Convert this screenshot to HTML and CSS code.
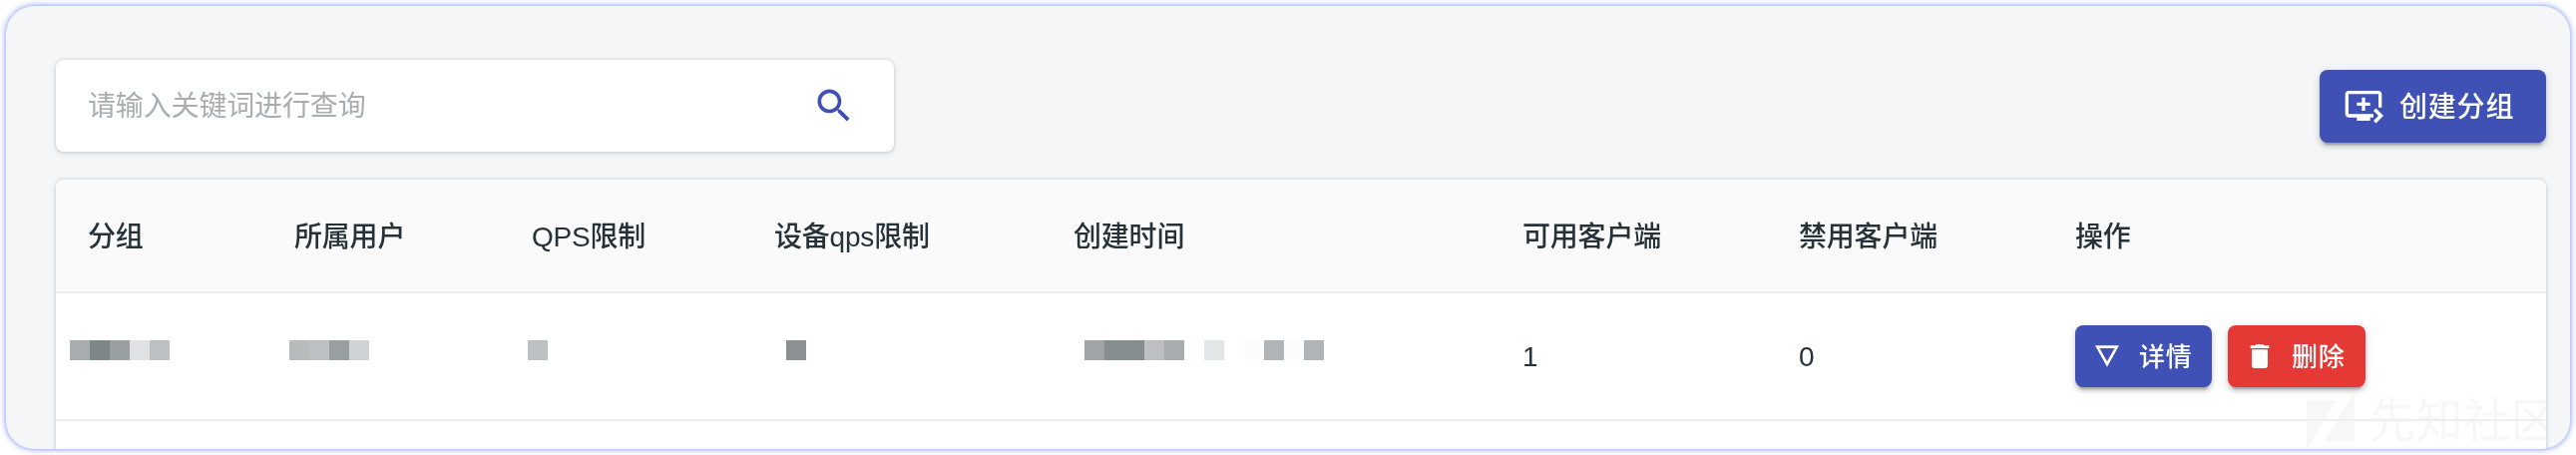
FILE: index.html
```html
<!DOCTYPE html>
<html lang="zh-CN">
<head>
<meta charset="utf-8">
<title>分组</title>
<link rel="stylesheet" href="styles.css">
</head>
<body>
<main class="panel">
  <div class="toolbar">
    <div class="search">
      <span class="placeholder">请输入关键词进行查询</span>
      <svg class="icon-search" viewBox="0 0 24 24"><path d="M15.5 14h-.79l-.28-.27C15.41 12.59 16 11.11 16 9.5 16 5.91 13.09 3 9.5 3S3 5.91 3 9.5 5.91 16 9.5 16c1.61 0 3.09-.59 4.23-1.57l.27.28v.79l5 4.99L20.49 19l-4.99-5zm-6 0C7.01 14 5 11.99 5 9.5S7.01 5 9.5 5 14 7.01 14 9.5 11.99 14 9.5 14z"/></svg>
    </div>
    <button class="btn btn-create">
      <svg class="icon-create" viewBox="0 0 24 24"><path d="M21 3H3c-1.11 0-2 .89-2 2v12c0 1.1.89 2 2 2h5v2h8v-2h2v-2H3V5h18v8h2V5c0-1.11-.9-2-2-2zm-8 7V7h-2v3H8v2h3v3h2v-3h3v-2h-3zm11 8l-4.5 4.5L18 21l3-3-3-3 1.5-1.5L24 18z"/></svg>
      <span class="btn-label">创建分组</span>
    </button>
  </div>
  <section class="table">
    <div class="row head">
      <div class="cell">分组</div>
      <div class="cell">所属用户</div>
      <div class="cell cell-qps">QPS限制</div>
      <div class="cell">设备qps限制</div>
      <div class="cell">创建时间</div>
      <div class="cell">可用客户端</div>
      <div class="cell">禁用客户端</div>
      <div class="cell">操作</div>
    </div>
    <div class="row body">
      <div class="cell"><div class="mask mask-group"><i class="g3"></i><i class="g6"></i><i class="g4"></i><i class="g1"></i><i class="g2"></i></div></div>
      <div class="cell"><div class="mask mask-user"><i class="g2b"></i><i class="g2"></i><i class="g4"></i><i class="g1b"></i></div></div>
      <div class="cell"><div class="mask mask-qps"><i class="g2"></i></div></div>
      <div class="cell"><div class="mask mask-device"><i class="g5"></i></div></div>
      <div class="cell"><div class="mask mask-time"><i class="g4b"></i><i class="g5b"></i><i class="g5b"></i><i class="g2c"></i><i class="g3"></i><i></i><i class="g1c"></i><i></i><i class="g0"></i><i class="g3b"></i><i class="g0"></i><i class="g3b"></i></div></div>
      <div class="cell number">1</div>
      <div class="cell number">0</div>
      <div class="cell actions">
        <button class="btn btn-detail">
          <svg class="icon-small" viewBox="0 0 24 24"><path d="M3 4l9 16 9-16H3zm3.38 2h11.25L12 16 6.38 6z"/></svg>
          <span class="btn-label">详情</span>
        </button>
        <button class="btn btn-delete">
          <svg class="icon-small" viewBox="0 0 24 24"><path d="M6 19c0 1.1.9 2 2 2h8c1.1 0 2-.9 2-2V7H6v12zM19 4h-3.5l-1-1h-5l-1 1H5v2h14V4z"/></svg>
          <span class="btn-label">删除</span>
        </button>
      </div>
    </div>
  </section>
  <div class="watermark">
    <svg class="watermark-logo" viewBox="0 0 48 57"><path d="M0 8h30L0 57zM48 0v49H18z"/></svg>
    <span class="watermark-text">先知社区</span>
  </div>
</main>
</body>
</html>
```
FILE: styles.css
```css
* { box-sizing: border-box; }

body {
  margin: 0;
  padding: 6px;
  height: 456px;
  overflow: hidden;
  background: #fff;
  color: #263238;
  font: 28px/40px "Liberation Sans", "Noto Sans CJK SC", sans-serif;
}

.panel {
  position: relative;
  height: 444px;
  padding: 54px 24px 0 50px;
  overflow: hidden;
  border-radius: 28px;
  background: #f4f6f8;
  box-shadow: 0 0 6px #7085ee;
}

.toolbar {
  display: flex;
  justify-content: space-between;
  align-items: center;
  height: 92px;
  margin-bottom: 28px;
}

.search {
  display: flex;
  justify-content: space-between;
  align-items: center;
  width: 840px;
  height: 92px;
  padding: 0 38px 0 32px;
  border-radius: 8px;
  background: #fff;
  box-shadow: 0 0 0 2px rgba(63, 63, 68, .05), 0 2px 6px rgba(63, 63, 68, .15);
}

.placeholder {
  padding-top: 2px;
  color: #a8adaf;
  letter-spacing: -.15px;
}

svg { display: block; flex: none; }

.icon-search { width: 44px; height: 44px; fill: #3f51b5; }
.icon-create { width: 40px; height: 40px; fill: #fff; }
.icon-small { width: 32px; height: 32px; fill: #fff; }

.btn {
  display: flex;
  align-items: center;
  margin: 0;
  border: 0;
  border-radius: 8px;
  color: #fff;
  background: #3f51b5;
  font-family: inherit;
  font-weight: 500;
  letter-spacing: .8px;
  box-shadow: 0 6px 2px -4px rgba(0, 0, 0, .2), 0 4px 4px rgba(0, 0, 0, .14), 0 2px 10px rgba(0, 0, 0, .12);
}

.btn-label { padding-bottom: 3px; }

.btn-create {
  gap: 16px;
  width: 227px;
  height: 73px;
  padding: 0 0 0 24px;
  font-size: 28px;
}

.table {
  height: 300px;
  border-radius: 8px 8px 0 0;
  background: #fff;
  box-shadow: 0 0 0 2px rgba(63, 63, 68, .05), 0 2px 6px rgba(63, 63, 68, .15);
}

.row {
  display: grid;
  grid-template-columns: 207px 237px 244px 300px 450px 277px 277px 1fr;
  align-items: center;
  border-bottom: 2px solid #eee;
}

.head {
  height: 114px;
  padding-top: 3px;
  border-radius: 8px 8px 0 0;
  background: #fafafa;
  font-weight: 500;
  letter-spacing: -.2px;
}

.body { height: 128px; }

.cell { padding-left: 32px; }
.cell-qps { padding-left: 33px; }
.number { padding-top: 2px; }

.mask {
  display: flex;
  margin-top: -12px;
}

.mask i { width: 20px; height: 20px; }

.mask-group { margin-left: -18px; }
.mask-user { margin-left: -5px; }
.mask-qps { margin-left: -3px; }
.mask-device { margin-left: 12px; }
.mask-time { margin-left: 11px; }

.g0 { background: #fcfcfc; }
.g1 { background: #e0e1e3; }
.g1b { background: #d0d3d4; }
.g1c { background: #e4e5e7; }
.g2 { background: #bdc1c4; }
.g2b { background: #b7bbbc; }
.g2c { background: #bebfc1; }
.g3 { background: #a7acae; }
.g3b { background: #b0b4b7; }
.g4 { background: #999ea0; }
.g4b { background: #a0a4a6; }
.g5 { background: #8c9194; }
.g5b { background: #868d8f; }
.g6 { background: #7f8688; }

.actions {
  display: flex;
  gap: 16px;
}

.btn-detail,
.btn-delete {
  gap: 16px;
  width: 137px;
  height: 62px;
  padding: 0 0 0 16px;
  font-size: 26px;
}

.btn-delete {
  width: 138px;
  background: #e53935;
}

.watermark {
  position: absolute;
  right: 12px;
  bottom: 0;
  display: flex;
  align-items: flex-end;
  gap: 14px;
  color: #f7f7f7;
  font-size: 47px;
  line-height: 57px;
  mix-blend-mode: darken;
}

.watermark-logo { width: 48px; height: 57px; fill: currentColor; }
.watermark-text { letter-spacing: .5px; }
```
